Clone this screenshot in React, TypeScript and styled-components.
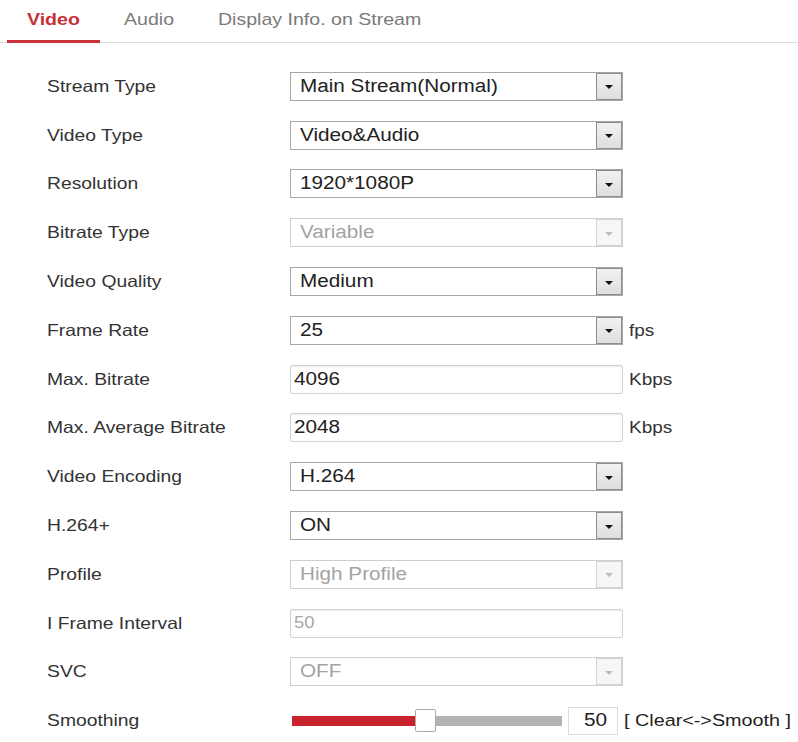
import React, { FC } from "react";
import styled, { createGlobalStyle, css } from "styled-components";

const GlobalStyle = createGlobalStyle`
  html, body {
    margin: 0;
    padding: 0;
    background: #fff;
  }
  body {
    font-family: "Liberation Sans", Arial, sans-serif;
    color: #333;
  }
`;

// the source capture is a little wider than tall, so glyphs are stretched
const wide = css`
  display: inline-block;
  transform: scaleX(1.15);
  transform-origin: left center;
  white-space: nowrap;
`;

const Page = styled.div`
  width: 798px;
  min-height: 742px;
  background: #fff;
`;

const TabBar = styled.div`
  display: flex;
  gap: 4px;
  height: 42px;
  padding-left: 7px;
  border-bottom: 1px solid #dcdcdc;
`;

const Tab = styled.div<{ $active?: boolean }>`
  display: flex;
  align-items: center;
  height: 40px;
  padding: 0 27px 0 20px;
  border-bottom: 3px solid ${(p) => (p.$active ? "#c9303a" : "transparent")};
  margin-bottom: -1px;
`;

const TabText = styled.span<{ $active?: boolean }>`
  ${wide}
  font-size: 17px;
  font-weight: ${(p) => (p.$active ? 700 : 400)};
  color: ${(p) => (p.$active ? "#c9303a" : "#7a7a7a")};
`;

const Form = styled.div`
  display: grid;
  grid-auto-rows: 48.8px;
  padding-top: 19px;
`;

const Row = styled.div`
  display: flex;
  align-items: center;
  padding-left: 47px;
`;

const Label = styled.div`
  width: 243px;
  flex: none;
`;

const LabelText = styled.span`
  ${wide}
  transform: scaleX(1.17);
  font-size: 16.5px;
  color: #333;
`;

const Unit = styled.span`
  ${wide}
  margin-left: 6px;
  font-size: 16.5px;
  color: #333;
`;

const SelectBox = styled.div<{ $disabled?: boolean }>`
  display: flex;
  align-items: stretch;
  width: 333px;
  height: 29px;
  box-sizing: border-box;
  border: 1px solid ${(p) => (p.$disabled ? "#cfcfcf" : "#a8a8a8")};
  background: #fff;
`;

const SelectValue = styled.div<{ $disabled?: boolean }>`
  flex: 1;
  display: flex;
  align-items: center;
  padding-left: 9px;
  color: ${(p) => (p.$disabled ? "#a3a3a3" : "#222")};
`;

const ValueText = styled.span<{ $small?: boolean }>`
  ${wide}
  font-size: ${(p) => (p.$small ? "16px" : "18px")};
`;

const SelectButton = styled.div<{ $disabled?: boolean }>`
  width: 26px;
  display: flex;
  align-items: center;
  justify-content: center;
  box-sizing: border-box;
  border: 1px solid ${(p) => (p.$disabled ? "#d4d4d4" : "#8c8c8c")};
  background: ${(p) =>
    p.$disabled ? "#f6f6f6" : "linear-gradient(#f2f2f2, #dedede)"};
`;

const Arrow = styled.span<{ $disabled?: boolean }>`
  width: 0;
  height: 0;
  border-left: 4px solid transparent;
  border-right: 4px solid transparent;
  border-top: 4px solid ${(p) => (p.$disabled ? "#bcbcbc" : "#111")};
  margin-top: 2px;
`;

const TextBox = styled.div<{ $disabled?: boolean }>`
  display: flex;
  align-items: center;
  width: 333px;
  height: 29px;
  box-sizing: border-box;
  padding-left: 3px;
  border: 1px solid #d2d2d2;
  box-shadow: inset 0 1px 1px rgba(0, 0, 0, 0.08);
  border-radius: 2px;
  color: ${(p) => (p.$disabled ? "#a8a8a8" : "#222")};
`;

const SliderTrack = styled.div`
  position: relative;
  margin-left: 2px;
  width: 270px;
  height: 10px;
  background: #b3b3b3;
`;

const SliderFill = styled.div`
  height: 100%;
  background: #c8232c;
`;

const SliderThumb = styled.div`
  position: absolute;
  top: -7px;
  width: 21px;
  height: 23px;
  box-sizing: border-box;
  background: #fff;
  border: 1px solid #a9a9a9;
  border-radius: 2px;
`;

const SliderValue = styled.div`
  margin-left: 6px;
  width: 50px;
  height: 28px;
  box-sizing: border-box;
  border: 1px solid #dadada;
  display: flex;
  align-items: center;
  justify-content: flex-end;
  padding-right: 10px;
  color: #222;
`;

const SliderValueText = styled.span`
  ${wide}
  transform-origin: right center;
  font-size: 18px;
`;

const SliderHint = styled.span`
  ${wide}
  margin-left: 6px;
  font-size: 17.2px;
  color: #222;
`;

const Select: FC<{ value: string; disabled?: boolean }> = ({ value, disabled }) => (
  <SelectBox $disabled={disabled}>
    <SelectValue $disabled={disabled}>
      <ValueText>{value}</ValueText>
    </SelectValue>
    <SelectButton $disabled={disabled}>
      <Arrow $disabled={disabled} />
    </SelectButton>
  </SelectBox>
);

const Field: FC<{ label: string; children: React.ReactNode }> = ({ label, children }) => (
  <Row>
    <Label>
      <LabelText>{label}</LabelText>
    </Label>
    {children}
  </Row>
);

const Slider: FC<{ value: number }> = ({ value }) => {
  const fill = (value / 100) * 250;
  return (
    <>
      <SliderTrack>
        <SliderFill style={{ width: fill }} />
        <SliderThumb style={{ left: fill - 2 }} />
      </SliderTrack>
      <SliderValue>
        <SliderValueText>{value}</SliderValueText>
      </SliderValue>
      <SliderHint>[ Clear&lt;-&gt;Smooth ]</SliderHint>
    </>
  );
};

export default function App() {
  return (
    <Page>
      <GlobalStyle />
      <TabBar>
        <Tab $active>
          <TabText $active>Video</TabText>
        </Tab>
        <Tab>
          <TabText>Audio</TabText>
        </Tab>
        <Tab>
          <TabText>Display Info. on Stream</TabText>
        </Tab>
      </TabBar>
      <Form>
        <Field label="Stream Type">
          <Select value="Main Stream(Normal)" />
        </Field>
        <Field label="Video Type">
          <Select value="Video&Audio" />
        </Field>
        <Field label="Resolution">
          <Select value="1920*1080P" />
        </Field>
        <Field label="Bitrate Type">
          <Select value="Variable" disabled />
        </Field>
        <Field label="Video Quality">
          <Select value="Medium" />
        </Field>
        <Field label="Frame Rate">
          <Select value="25" />
          <Unit>fps</Unit>
        </Field>
        <Field label="Max. Bitrate">
          <TextBox>
            <ValueText>4096</ValueText>
          </TextBox>
          <Unit>Kbps</Unit>
        </Field>
        <Field label="Max. Average Bitrate">
          <TextBox>
            <ValueText>2048</ValueText>
          </TextBox>
          <Unit>Kbps</Unit>
        </Field>
        <Field label="Video Encoding">
          <Select value="H.264" />
        </Field>
        <Field label="H.264+">
          <Select value="ON" />
        </Field>
        <Field label="Profile">
          <Select value="High Profile" disabled />
        </Field>
        <Field label="I Frame Interval">
          <TextBox $disabled>
            <ValueText $small>50</ValueText>
          </TextBox>
        </Field>
        <Field label="SVC">
          <Select value="OFF" disabled />
        </Field>
        <Field label="Smoothing">
          <Slider value={50} />
        </Field>
      </Form>
    </Page>
  );
}
